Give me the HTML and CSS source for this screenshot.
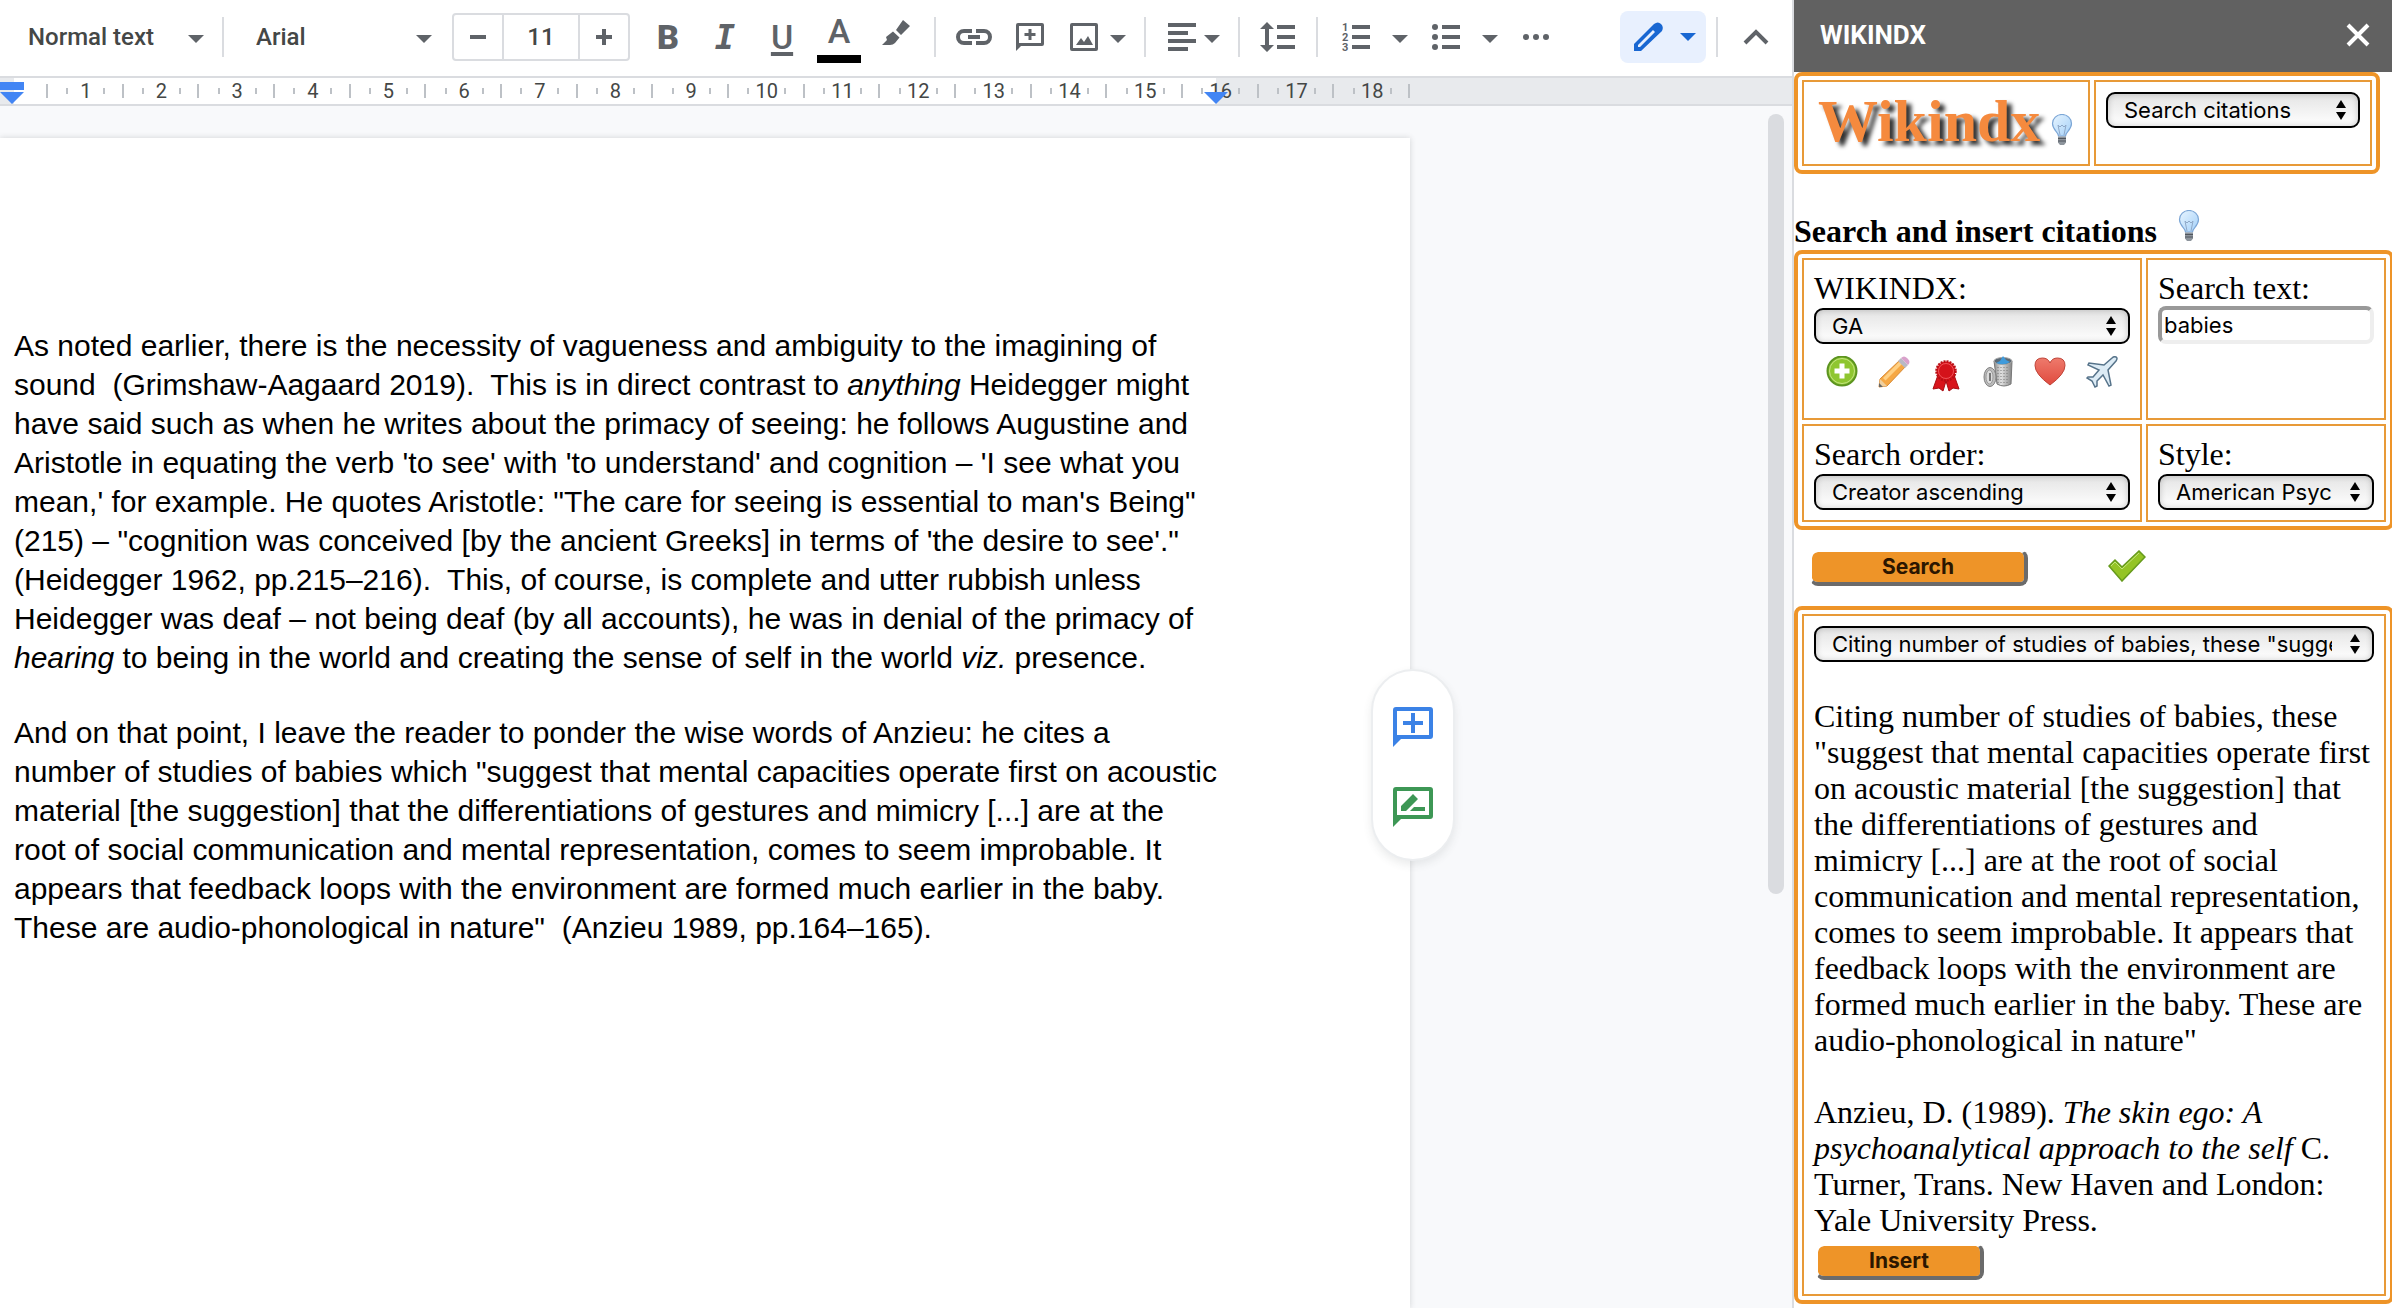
FILE: index.html
```
<!DOCTYPE html>
<html lang="en">
<head>
  <meta charset="utf-8">
  <title>WIKINDX citations</title>
  <link rel="stylesheet" href="styles.css">
</head>
<body>
<svg class="sprite" aria-hidden="true">
  <defs>
    <linearGradient id="glass" x1="0" y1="0" x2="1" y2="1">
      <stop offset="0" stop-color="#e8f5ff"/>
      <stop offset="1" stop-color="#a4d0f8"/>
    </linearGradient>
    <linearGradient id="metal" x1="0" y1="0" x2="1" y2="0">
      <stop offset="0" stop-color="#8b8b8b"/>
      <stop offset=".4" stop-color="#e2e2e2"/>
      <stop offset="1" stop-color="#858585"/>
    </linearGradient>
    <linearGradient id="red" x1="0" y1="0" x2="0" y2="1">
      <stop offset="0" stop-color="#ee7a6c"/>
      <stop offset="1" stop-color="#e04a3e"/>
    </linearGradient>
  </defs>
  <symbol id="caret" viewBox="0 0 16 8"><path d="M0 0h16L8 8z"/></symbol>
  <symbol id="updown" viewBox="0 0 10 20"><path d="M5 0l5 8H0zM5 20l5-8H0z"/></symbol>
  <symbol id="bulb" viewBox="0 0 32 32">
    <path d="M12.500 22c0-4-6-6-6-12.500a9.500 9 0 0 1 19 0c0 6.500-6 8.500-6 12.500z" fill="url(#glass)" stroke="#7ca6d6" stroke-width="1.200"/>
    <path d="M14 21l-2-10 2 2 2-2 2 2 2-2-2 10" fill="none" stroke="#8fa9c8"/>
    <path d="M12 22.500h8v6l-2 2.500h-4l-2-2.500z" fill="#8d949c"/>
    <path d="M12 24.500h8M12 27h8" stroke="#50565e"/>
  </symbol>
</svg>

<div class="app">
  <main class="editor">
    <div class="toolbar">
      <div class="picker picker-style">
        <select aria-label="Styles"><option>Normal text</option></select>
        <svg class="caret"><use href="#caret"/></svg>
      </div>
      <span class="sep"></span>
      <div class="picker picker-font">
        <select aria-label="Font"><option>Arial</option></select>
        <svg class="caret"><use href="#caret"/></svg>
      </div>
      <div class="font-size">
        <button aria-label="Decrease font size"><svg viewBox="0 0 16 16"><path d="M0 6h16v4H0z"/></svg></button>
        <input type="text" aria-label="Font size" value="11">
        <button aria-label="Increase font size"><svg viewBox="0 0 16 16"><path d="M0 6h6V0h4v6h6v4h-6v6H6v-6H0z"/></svg></button>
      </div>
      <div class="format">
        <button class="tool letter bold">B</button>
        <button class="tool letter italic">I</button>
        <button class="tool letter underline">U</button>
        <button class="tool letter color">A</button>
        <button class="tool" aria-label="Highlight color">
          <svg class="icon" viewBox="0 0 36 36"><path d="M25 1l7 6-9 9-5-5zM15 12.500l6.500 6L17 24q-2 2-5 2H4l5-5-1-3z"/></svg>
        </button>
      </div>
      <span class="sep"></span>
      <button class="tool" aria-label="Insert link">
        <svg class="icon line" viewBox="0 0 36 36"><path d="M16 12H8a6 6 0 0 0 0 12h8M20 12h8a6 6 0 0 1 0 12h-8M12 18h12"/></svg>
      </button>
      <button class="tool" aria-label="Add comment">
        <svg class="icon" viewBox="0 0 36 36"><path fill-rule="evenodd" d="M6 4h24a2 2 0 0 1 2 2v19a2 2 0 0 1-2 2H9l-5 5V6a2 2 0 0 1 2-2zM7 7v17h22V7zM16.500 10h3v4h4v3h-4v4h-3v-4h-4v-3h4z"/></svg>
      </button>
      <button class="drop" aria-label="Insert image">
        <svg class="icon" viewBox="0 0 36 36"><path fill-rule="evenodd" d="M6 4h24a2 2 0 0 1 2 2v24a2 2 0 0 1-2 2H6a2 2 0 0 1-2-2V6a2 2 0 0 1 2-2zM7 7v22h22V7zM10 26l5-7 3 4 4-6 5 9z"/></svg>
        <svg class="caret"><use href="#caret"/></svg>
      </button>
      <span class="sep"></span>
      <button class="drop tight" aria-label="Align">
        <svg class="icon" viewBox="0 0 36 36"><path d="M4 4h28v4H4zM4 12h20v4H4zM4 20h28v4H4zM4 28h20v4H4z"/></svg>
        <svg class="caret"><use href="#caret"/></svg>
      </button>
      <span class="sep"></span>
      <button class="tool" aria-label="Line spacing">
        <svg class="icon" viewBox="0 0 36 36"><path d="M7 3l7 7H9v16h5l-7 7-7-7h5V10H0zM17 6h18v4H17zM17 16h18v4H17zM17 26h18v4H17z"/></svg>
      </button>
      <span class="sep"></span>
      <button class="drop wide" aria-label="Numbered list">
        <svg class="icon" viewBox="0 0 36 36"><path d="M14 6h18v4H14zM14 16h18v4H14zM14 26h18v4H14z"/><text x="4" y="12">1</text><text x="4" y="22">2</text><text x="4" y="32">3</text></svg>
        <svg class="caret"><use href="#caret"/></svg>
      </button>
      <button class="drop wide" aria-label="Bulleted list">
        <svg class="icon" viewBox="0 0 36 36"><path d="M14 6h18v4H14zM14 16h18v4H14zM14 26h18v4H14z"/><circle cx="7" cy="8" r="3"/><circle cx="7" cy="18" r="3"/><circle cx="7" cy="28" r="3"/></svg>
        <svg class="caret"><use href="#caret"/></svg>
      </button>
      <button class="tool" aria-label="More">
        <svg class="icon" viewBox="0 0 36 36"><circle cx="8" cy="18" r="3"/><circle cx="18" cy="18" r="3"/><circle cx="28" cy="18" r="3"/></svg>
      </button>
      <button class="drop mode" aria-label="Editing mode">
        <svg class="icon" viewBox="0 0 36 36"><path fill-rule="evenodd" d="M4 25L24 5q4-3 7 0t1 7L11 32H4zM8 26v2h2l15-15-2-2z"/></svg>
        <svg class="caret"><use href="#caret"/></svg>
      </button>
      <span class="sep"></span>
      <button class="tool" aria-label="Hide the menus">
        <svg class="icon line" viewBox="0 0 36 36"><path d="M7 24l11-11 11 11"/></svg>
      </button>
    </div>

    <div class="ruler">
      <div class="scale">
        <span>1</span><span>2</span><span>3</span><span>4</span><span>5</span><span>6</span>
        <span>7</span><span>8</span><span>9</span><span>10</span><span>11</span><span>12</span>
        <span>13</span><span>14</span><span>15</span><span>16</span><span>17</span><span>18</span>
      </div>
      <svg class="marker marker-left" viewBox="0 0 24 22"><path d="M0 0h24v8H0zM0 10h24L12 22z"/></svg>
      <svg class="marker marker-right" viewBox="0 0 24 22"><path d="M0 10h24L12 22z"/></svg>
    </div>

    <div class="canvas">
      <article class="page">
        <p>As noted earlier, there is the necessity of vagueness and ambiguity to the imagining of<br>
        sound&nbsp; (Grimshaw-Aagaard 2019).&nbsp; This is in direct contrast to <i>anything</i> Heidegger might<br>
        have said such as when he writes about the primacy of seeing: he follows Augustine and<br>
        Aristotle in equating the verb 'to see' with 'to understand' and cognition – 'I see what you<br>
        mean,' for example. He quotes Aristotle: "The care for seeing is essential to man's Being"<br>
        (215) – "cognition was conceived [by the ancient Greeks] in terms of 'the desire to see'."<br>
        (Heidegger 1962, pp.215–216).&nbsp; This, of course, is complete and utter rubbish unless<br>
        Heidegger was deaf – not being deaf (by all accounts), he was in denial of the primacy of<br>
        <i>hearing</i> to being in the world and creating the sense of self in the world <i>viz.</i> presence.</p>
        <p>And on that point, I leave the reader to ponder the wise words of Anzieu: he cites a<br>
        number of studies of babies which "suggest that mental capacities operate first on acoustic<br>
        material [the suggestion] that the differentiations of gestures and mimicry [...] are at the<br>
        root of social communication and mental representation, comes to seem improbable. It<br>
        appears that feedback loops with the environment are formed much earlier in the baby.<br>
        These are audio-phonological in nature"&nbsp; (Anzieu 1989, pp.164–165).</p>
        <div class="bubble">
          <button class="comment" aria-label="Add comment">
            <svg viewBox="0 0 40 40"><path fill-rule="evenodd" d="M3 0h34a3 3 0 0 1 3 3v26a3 3 0 0 1-3 3H8l-8 8V3a3 3 0 0 1 3-3zM4 4v24h32V4zM18 6h4v8h8v4h-8v8h-4v-8h-8v-4h8z"/></svg>
          </button>
          <button class="suggest" aria-label="Suggest edits">
            <svg viewBox="0 0 40 40"><path fill-rule="evenodd" d="M3 0h34a3 3 0 0 1 3 3v26a3 3 0 0 1-3 3H8l-8 8V3a3 3 0 0 1 3-3zM4 4v24h32V4zM8 24v-5L20 7l5 5-12 12zM17 24l4-4h11v4z"/></svg>
          </button>
        </div>
      </article>
      <div class="scrollbar"></div>
    </div>
  </main>

  <aside class="sidebar">
    <header class="sidebar-header">
      <h1>WIKINDX</h1>
      <button aria-label="Close"><svg viewBox="0 0 24 24"><path d="M2 2l20 20M22 2L2 22"/></svg></button>
    </header>

    <section class="panel panel-top">
      <div class="cell brand">
        <span class="logo">Wikindx</span>
        <svg class="pic"><use href="#bulb"/></svg>
      </div>
      <div class="cell">
        <div class="select">
          <select aria-label="Action"><option>Search citations</option></select>
          <svg><use href="#updown"/></svg>
        </div>
      </div>
    </section>

    <h2>Search and insert citations <svg class="pic"><use href="#bulb"/></svg></h2>

    <section class="panel panel-form">
      <div class="cell">
        <label for="wikindx">WIKINDX:</label>
        <div class="select">
          <select id="wikindx"><option>GA</option></select>
          <svg><use href="#updown"/></svg>
        </div>
        <div class="actions">
          <svg class="pic" viewBox="0 0 32 32"><circle cx="16" cy="15" r="14.500" fill="#8fc630" stroke="#5c9420" stroke-width="2"/><circle cx="16" cy="15" r="12.500" fill="none" stroke="#c4e582"/><path d="M13.500 7.500h5v5h5v5h-5v5h-5v-5h-5v-5h5z" fill="#fff"/></svg>
          <svg class="pic" viewBox="0 0 32 32"><path d="M1 31l1-8L23 3l6 6L9 30z" fill="#f6a844" stroke="#d88a35"/><path d="M5 22L23 4l2.500 2.500-18 18z" fill="#ffd083"/><path d="M1 31l1-8 7 7z" fill="#efcf9e"/><path d="M1 31v-4l4 4z" fill="#666"/><path d="M20 5l3-3 7 7-3 3z" fill="#b9b9c4"/><path d="M23 2q3-3 6 0l1 1q3 3 0 6z" fill="#d9a1cb"/></svg>
          <svg class="pic low" viewBox="0 0 32 32"><path d="M8 15L3 29l6-1 4 3 3-10 3 10 4-3 6 1-5-14z" fill="#d8151c" stroke="#a80d12"/><circle cx="16" cy="11" r="9.500" fill="#e2161d" stroke="#b80f15" stroke-width="2.500" stroke-dasharray="2 1"/><circle cx="16" cy="11" r="7.500" fill="#d4121a" stroke="#ee5157"/></svg>
          <svg class="pic" viewBox="0 0 32 32"><path d="M12 5h18l-1 23q-7 4-14 0z" fill="url(#metal)" stroke="#777"/><path d="M16 11v16M19 11v18M22 11v18M25 11v17" stroke="#777" stroke-dasharray="1 2"/><ellipse cx="21" cy="5" rx="9" ry="3.500" fill="#5d6a75" stroke="#aaa"/><path d="M14 7l4-2 3-5 3 4 4 2q-6 4-14 1z" fill="#3f9bdc"/><ellipse cx="8" cy="21" rx="6" ry="9.500" fill="#bcbcbc" stroke="#808080"/><ellipse cx="7.500" cy="21" rx="3.500" ry="7" fill="#dcdcdc" stroke="#9a9a9a"/><path d="M8 17v8" stroke="#777" stroke-width="2"/></svg>
          <svg class="pic" viewBox="0 0 32 32"><path d="M16 29Q1 18 1 9.500 1 2 8.500 2 14 2 16 7q2-5 7.500-5Q31 2 31 9.500 31 18 16 29z" fill="url(#red)" stroke="#bf4438"/></svg>
          <svg class="pic" viewBox="0 0 32 32"><path d="M30 1q2 1 0 4l-8 9 3 15-2 1-6-11-6 6v5l-2 1-3-6-5-3 1-1h5l6-7L2 9l1-2 15 2 8-7q2-2 4-1z" fill="#dcebf5" stroke="#56738a" stroke-width="1.500"/></svg>
        </div>
      </div>
      <div class="cell">
        <label for="text">Search text:</label>
        <input type="text" id="text" value="babies">
      </div>
      <div class="cell">
        <label for="order">Search order:</label>
        <div class="select">
          <select id="order"><option>Creator ascending</option></select>
          <svg><use href="#updown"/></svg>
        </div>
      </div>
      <div class="cell">
        <label for="style">Style:</label>
        <div class="select">
          <select id="style"><option>American Psychological Association</option></select>
          <svg><use href="#updown"/></svg>
        </div>
      </div>
    </section>

    <div class="submit">
      <button class="button">Search</button>
      <svg class="tick" viewBox="0 0 38 32"><path d="M1 16l6-6 7 7L31 1l6 6-23 24z" fill="#94c425" stroke="#669a1c" stroke-width="1.500"/><path d="M3 16l4-4 7 7L31 3" fill="none" stroke="#c5e57c"/></svg>
    </div>

    <section class="panel panel-result">
      <div class="cell">
        <div class="select">
          <select aria-label="Citation"><option>Citing number of studies of babies, these "suggest that mental</option></select>
          <svg><use href="#updown"/></svg>
        </div>
        <p>Citing number of studies of babies, these "suggest that mental capacities operate first on acoustic material [the suggestion] that the differentiations of gestures and mimicry [...] are at the root of social communication and mental representation, comes to seem improbable. It appears that feedback loops with the environment are formed much earlier in the baby. These are audio-phonological in nature"</p>
        <p>Anzieu, D. (1989). <i>The skin ego: A psychoanalytical approach to the self</i> C. Turner, Trans. New Haven and London: Yale University Press.</p>
        <button class="button insert">Insert</button>
      </div>
    </section>
  </aside>
</div>
</body>
</html>
```
FILE: styles.css
```
* {
  box-sizing: border-box;
}

html, body {
  margin: 0;
  height: 100%;
  overflow: hidden;
}

button, select, input {
  margin: 0;
  padding: 0;
  border: none;
  background: none;
  color: inherit;
  font: inherit;
}

select {
  appearance: none;
}

svg {
  display: block;
  flex: none;
}

.sprite {
  position: absolute;
  width: 0;
  height: 0;
}

.app {
  display: flex;
  height: 100%;
}

/* editor */

.editor {
  display: flex;
  flex-direction: column;
  flex: 1;
  min-width: 0;
  font-family: Roboto, sans-serif;
}

.toolbar {
  display: flex;
  align-items: center;
  height: 78px;
  padding: 0 8px 2px 0;
  border-bottom: 2px solid #dadce0;
  background: #fff;
  color: #5f6368;
  fill: #5f6368;
  font-size: 24px;
  font-weight: 500;
}

.sep {
  flex: none;
  width: 2px;
  height: 40px;
  margin: 0 10px;
  background: #dadce0;
}

.caret {
  width: 16px;
  height: 8px;
  margin-top: 4px;
}

.picker {
  display: flex;
  align-items: center;
  color: #444746;
}

.picker select {
  flex: 1;
  min-width: 0;
}

.picker-style {
  width: 212px;
  padding: 0 8px 0 28px;
}

.picker-font {
  width: 218px;
  padding: 0 20px 0 22px;
}

.font-size {
  display: flex;
  width: 178px;
  height: 48px;
  margin-right: 10px;
  border: 2px solid #dadce0;
  border-radius: 4px;
}

.font-size button {
  display: flex;
  align-items: center;
  justify-content: center;
  width: 48px;
}

.font-size button svg {
  width: 16px;
  height: 16px;
}

.font-size input {
  flex: 1;
  min-width: 0;
  border: solid #dadce0;
  border-width: 0 2px;
  color: #444746;
  text-align: center;
}

.format {
  display: flex;
  gap: 1px;
}

.tool {
  display: flex;
  flex: none;
  align-items: center;
  justify-content: center;
  width: 56px;
  height: 52px;
}

.icon {
  width: 36px;
  height: 36px;
}

.icon text {
  font-size: 11px;
  font-weight: 700;
}

.line {
  fill: none;
  stroke: #5f6368;
  stroke-width: 4;
}

.letter {
  font-size: 34px;
  line-height: 40px;
}

.bold {
  font-weight: 900;
}

.italic {
  font-family: "DejaVu Sans Mono", monospace;
  font-style: italic;
  font-weight: 700;
}

.underline {
  text-decoration: underline 4px;
  text-underline-offset: 3px;
}

.color {
  width: 44px;
  margin: 0 6px;
  padding-bottom: 4px;
  border-bottom: 8px solid #000;
}

.drop {
  display: flex;
  flex: none;
  align-items: center;
  gap: 8px;
  height: 52px;
  padding: 0 8px;
}

.drop.tight {
  gap: 4px;
}

.drop.wide {
  gap: 18px;
  padding: 0 10px;
}

.drop.mode {
  gap: 14px;
  margin-left: auto;
  padding: 0 10px;
  border-radius: 8px;
  background: #e8f0fe;
  fill: #1967d2;
}

.mode .caret {
  margin-top: 0;
}

.ruler {
  position: relative;
  height: 28px;
  padding-left: 46px;
  border-bottom: 2px solid #dadce0;
  background: linear-gradient(90deg, #e8eaed 14px, #fff 14px, #fff 1216px, #e8eaed 1216px);
}

.scale {
  display: grid;
  grid-template-columns: repeat(18, 1fr);
  width: 1364px;
  border-left: 2px solid transparent;
  background: linear-gradient(#bdc1c6, #bdc1c6) left center / 2px 14px no-repeat border-box;
  color: #444746;
  font-size: 20px;
  line-height: 26px;
  text-align: center;
}

.scale span {
  background:
    linear-gradient(#bdc1c6, #bdc1c6) 25% center / 2px 6px no-repeat,
    linear-gradient(#bdc1c6, #bdc1c6) 75% center / 2px 6px no-repeat,
    linear-gradient(#bdc1c6, #bdc1c6) right center / 2px 14px no-repeat;
}

.marker {
  position: absolute;
  top: 4px;
  width: 24px;
  height: 22px;
  fill: #4285f4;
}

.marker-left {
  left: 0;
}

.marker-right {
  left: 1204px;
}

.canvas {
  display: flex;
  flex: 1;
  justify-content: space-between;
  min-height: 0;
  background: #f8f9fb;
}

.page {
  position: relative;
  width: 1410px;
  margin-top: 32px;
  padding: 188px 0 0 14px;
  background: #fff;
  box-shadow: 0 0 6px rgba(60, 64, 67, .2);
  color: #000;
  font-family: "Liberation Sans", Arial, sans-serif;
  font-size: 30px;
  line-height: 39px;
  white-space: nowrap;
}

.page p {
  margin: 0 0 36px;
}

.bubble {
  position: absolute;
  top: 531px;
  right: -45px;
  display: flex;
  flex-direction: column;
  align-items: center;
  gap: 40px;
  width: 84px;
  padding: 36px 0 32px;
  border: 2px solid #eceef0;
  border-radius: 42px;
  background: #fff;
  box-shadow: 0 4px 8px rgba(60, 64, 67, .1);
}

.bubble button, .bubble svg {
  width: 40px;
  height: 40px;
}

.comment {
  fill: #3b82e6;
}

.suggest {
  fill: #3d9755;
}

.scrollbar {
  width: 16px;
  height: 780px;
  margin: 8px;
  border-radius: 8px;
  background: #dadce0;
}

/* sidebar */

.sidebar {
  flex: 0 0 600px;
  overflow: hidden;
  border-left: 2px solid #dadce0;
  background: #fff;
  color: #000;
  font-family: "Liberation Serif", "Times New Roman", serif;
  font-size: 32px;
  line-height: 36px;
}

.sidebar-header {
  display: flex;
  align-items: center;
  justify-content: space-between;
  height: 72px;
  padding: 0 22px 2px 26px;
  background: #616161;
  color: #fff;
  font-family: Roboto, sans-serif;
}

.sidebar-header h1 {
  margin: 0;
  font-size: 26px;
  font-weight: 700;
}

.sidebar-header svg {
  width: 24px;
  height: 24px;
  stroke: #fff;
  stroke-width: 4;
}

.panel {
  display: grid;
  gap: 4px;
  margin-right: -2px;
  padding: 4px;
  border: 4px solid #ee9428;
  border-radius: 8px;
}

.cell {
  min-width: 0;
  padding: 10px;
  border: 2px solid #e89a38;
}

.panel-top {
  grid-template-columns: 288px 1fr;
  height: 102px;
  margin-right: 12px;
}

.panel-form {
  grid-template-columns: 340px 1fr;
}

.brand {
  display: flex;
  align-items: flex-start;
  justify-content: space-between;
  padding-left: 14px;
}

.brand .pic {
  margin-top: 22px;
}

.logo {
  color: #f58a3e;
  font-size: 60px;
  font-weight: 700;
  line-height: 58px;
  text-shadow: 5px 4px 4px #333;
}

.pic {
  width: 32px;
  height: 32px;
}

.sidebar h2 {
  display: flex;
  align-items: flex-end;
  gap: 16px;
  height: 76px;
  margin: 0;
  padding-bottom: 1px;
  font-size: 32px;
}

.sidebar h2 .pic {
  margin-bottom: 7px;
}

label {
  display: block;
}

.select {
  display: flex;
  align-items: center;
  height: 36px;
  padding: 0 12px 0 16px;
  border: 2px solid #000;
  border-radius: 9px;
  background: linear-gradient(#e4e4e4, #fff);
  box-shadow: inset 0 0 6px rgba(0, 0, 0, .2);
}

.select select {
  flex: 1;
  min-width: 0;
  margin-right: 18px;
  overflow: hidden;
  font-family: Inter, sans-serif;
  font-size: 22px;
  line-height: 32px;
}

.select svg {
  width: 10px;
  height: 20px;
}

label + .select {
  margin-top: 2px;
}

.cell > input {
  width: 100%;
  height: 38px;
  padding: 0 2px;
  border: 4px solid #eee;
  border-top-color: #999;
  border-left-color: #999;
  border-radius: 8px;
  font-family: Inter, sans-serif;
  font-size: 22px;
  line-height: 30px;
}

.cell > input, .actions {
  display: flex;
}

.actions {
  gap: 20px;
  padding: 12px 12px 16px;
}

.pic.low {
  margin-top: 4px;
}

.submit {
  display: flex;
  align-items: flex-start;
  gap: 80px;
  padding: 20px 16px;
}

.button {
  display: block;
  width: 218px;
  height: 36px;
  border: solid #6b6b6b;
  border-width: 2px 4px 4px 2px;
  border-top-color: #fff;
  border-left-color: #fff;
  border-radius: 8px;
  background: #ee9428;
  background-clip: padding-box;
  color: #2b1600;
  font-family: Inter, sans-serif;
  font-size: 21px;
  font-weight: 700;
  line-height: 30px;
}

.button.insert {
  width: 168px;
  margin: 4px 2px;
}

.tick {
  width: 38px;
  height: 32px;
}

.cell p {
  margin: 36px 0 0;
}

.cell p + .button {
  margin-top: 6px;
}
```
